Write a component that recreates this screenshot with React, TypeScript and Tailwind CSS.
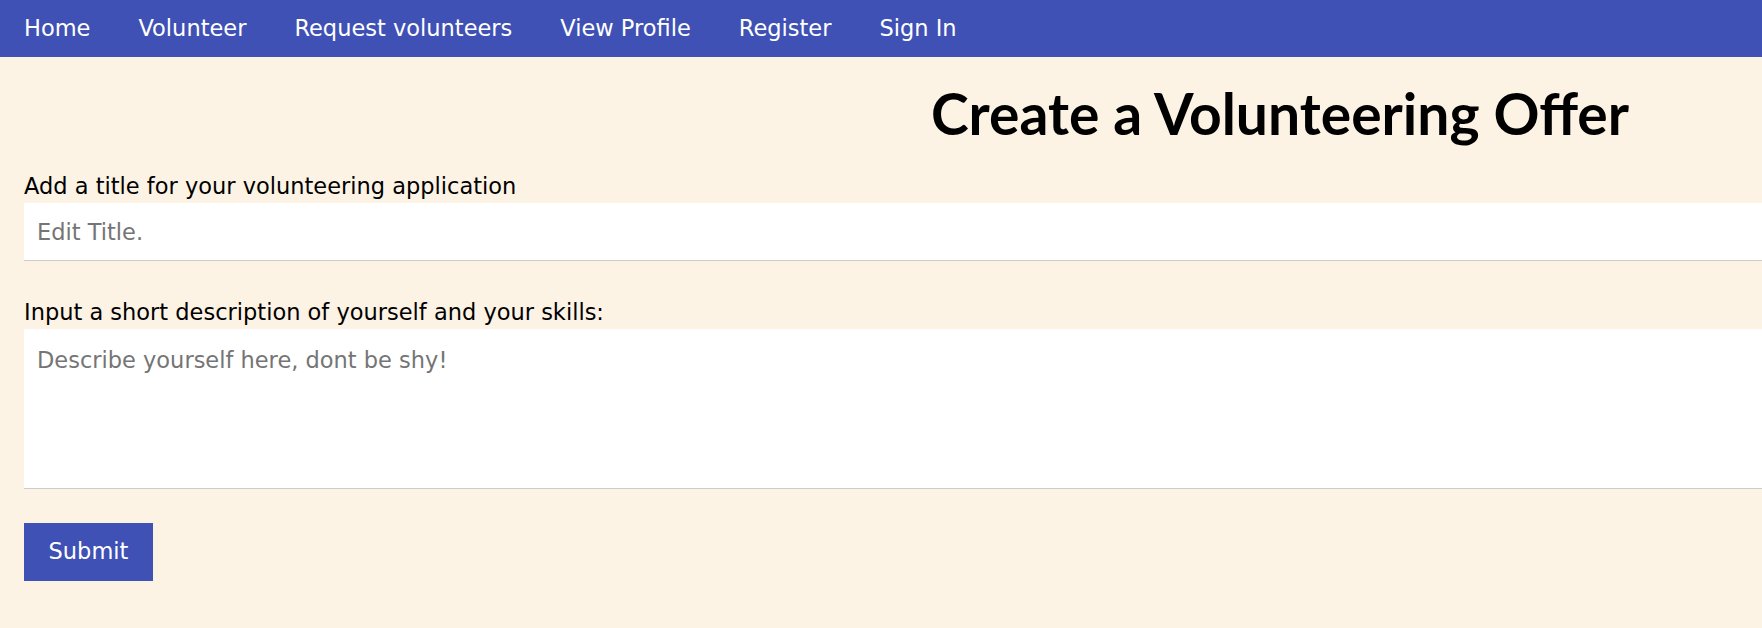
import React, { useState } from 'react';

const navLinks = ['Home', 'Volunteer', 'Request volunteers', 'View Profile', 'Register', 'Sign In'];

const App = () => {
  const [title, setTitle] = useState('');
  const [description, setDescription] = useState('');

  return (
    <div className="min-h-[628px] bg-[#fdf3e5] font-['DejaVu_Sans',Verdana,sans-serif] text-black overflow-hidden">
      {/* Top navigation */}
      <nav className="flex h-[57px] items-center bg-[#3f51b5]">
        {navLinks.map((link) => (
          <a key={link} href="#" className="px-6 text-[22.5px] text-white">
            {link}
          </a>
        ))}
      </nav>

      {/* Heading */}
      <h1 className="ml-[798px] mt-[24px] text-center font-['Lato',sans-serif] text-[57px] font-bold leading-[64px]">
        Create a Volunteering Offer
      </h1>

      <form className="pl-6" onSubmit={(e) => e.preventDefault()}>
        <label className="mb-[4px] mt-[28px] block text-[22.5px] leading-[26px]">
          Add a title for your volunteering application
        </label>
        <input
          type="text"
          value={title}
          onChange={(e) => setTitle(e.target.value)}
          placeholder="Edit Title."
          className="block h-[58px] w-full border-b border-[#cccccc] bg-white px-[13px] text-[22.5px] outline-none placeholder:text-[#757575]"
        />

        <label className="mb-[4px] mt-[38px] block text-[22.5px] leading-[26px]">
          Input a short description of yourself and your skills:
        </label>
        <textarea
          value={description}
          onChange={(e) => setDescription(e.target.value)}
          placeholder="Describe yourself here, dont be shy!"
          className="block h-[160px] w-full resize-none border-b border-[#cccccc] bg-white px-[13px] pt-[15px] text-[22.5px] outline-none placeholder:text-[#757575]"
        />

        <button
          type="submit"
          className="mt-[34px] h-[58px] w-[129px] bg-[#3f51b5] text-[22.5px] text-white"
        >
          Submit
        </button>
      </form>
    </div>
  );
};

export default App;
